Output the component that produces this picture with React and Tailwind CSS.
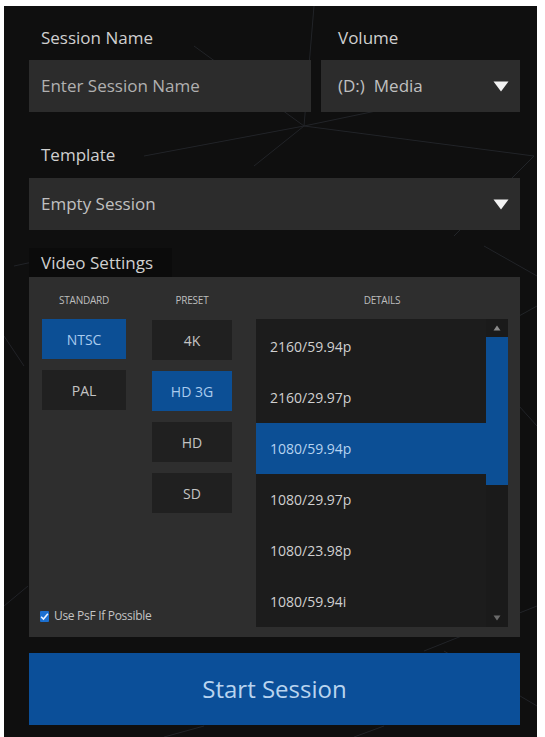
import React from "react";

const font = { fontFamily: '"Open Sans", "Noto Sans", "Liberation Sans", sans-serif' };

function Caret() {
  return (
    <svg width="16" height="11" viewBox="0 0 16 11" className="shrink-0">
      <path d="M0.5 0.5 L15.5 0.5 L8 10.5 Z" fill="#f2f2f2" />
    </svg>
  );
}

function PlainButton({ label, active }) {
  return (
    <div
      className={
        "h-[40px] flex items-center justify-center text-[14px] " +
        (active ? "bg-[#0c4f95] text-[#a9cbee]" : "bg-[#202020] text-[#c4c4c4]")
      }
    >
      {label}
    </div>
  );
}

const rows = ["2160/59.94p", "2160/29.97p", "1080/59.94p", "1080/29.97p", "1080/23.98p", "1080/59.94i"];

export default function App() {
  return (
    <div className="w-[545px] h-[737px] bg-white overflow-hidden" style={font}>
      <div className="relative ml-[4px] mt-[6px] w-[533px] h-[731px] bg-[#0f0f0f] pl-[25px] pr-[17px] pt-[20px] overflow-hidden">
        <svg className="absolute inset-0 pointer-events-none" width="533" height="731" viewBox="0 0 533 731">
          <g stroke="#2a2d33" strokeWidth="1" fill="none" opacity="0.7">
            <path d="M300 120 L190 40" />
            <path d="M300 120 L250 160" />
            <path d="M300 120 L420 95" />
            <path d="M300 120 L530 150" />
            <path d="M300 120 L310 0" />
            <path d="M300 120 L140 150" />
            <path d="M530 150 L450 230" />
            <path d="M0 330 L20 360" />
            <path d="M0 600 L24 580" />
            <path d="M515 310 L533 300" />
            <path d="M515 400 L533 420" />
            <path d="M420 645 L533 600" />
            <path d="M440 645 L533 700" />
            <path d="M160 731 L200 720" />
            <path d="M350 731 L380 720" />
            <path d="M80 245 L10 260" />
            <path d="M480 240 L533 270" />
          </g>
        </svg>

        <div className="relative">
          {/* Top row */}
          <div className="flex gap-[10px]">
            <div className="w-[282px]">
              <div className="pl-[12px] h-[24px] leading-[24px] text-[17px] text-[#d0d0d0]">Session Name</div>
              <div className="mt-[10px] h-[52px] bg-[#2c2c2c] flex items-center pl-[12px] text-[17px] text-[#b0b0b0]">
                Enter Session Name
              </div>
            </div>
            <div className="w-[199px]">
              <div className="pl-[17px] h-[24px] leading-[24px] text-[17px] text-[#d0d0d0]">Volume</div>
              <div className="mt-[10px] h-[52px] bg-[#2c2c2c] flex items-center justify-between pl-[17px] pr-[11px] text-[17px] text-[#c0c0c0]">
                <span>
                  (D:)<span className="ml-[9px]">Media</span>
                </span>
                <Caret />
              </div>
            </div>
          </div>

          {/* Template */}
          <div className="mt-[31px] pl-[12px] h-[24px] leading-[24px] text-[17px] text-[#d0d0d0]">Template</div>
          <div className="mt-[11px] h-[52px] bg-[#2c2c2c] flex items-center justify-between pl-[12px] pr-[11px] text-[17px] text-[#c0c0c0]">
            <span>Empty Session</span>
            <Caret />
          </div>

          {/* Video settings */}
          <div className="mt-[18px] w-[143px] h-[29px] bg-[#0b0b0b] pl-[12px] pt-[3px] leading-[24px] text-[17px] text-[#d0d0d0] whitespace-nowrap">
            Video Settings
          </div>
          <div className="h-[360px] bg-[#2e2e2e] pl-[13px] pr-[12px] pt-[16px] flex gap-0">
            {/* Standard */}
            <div className="w-[84px] flex flex-col">
              <div className="h-[14px] leading-[14px] text-[10px] text-[#bdbdbd] text-center tracking-tight">STANDARD</div>
              <div className="mt-[12px] flex flex-col gap-[11px]">
                <PlainButton label="NTSC" active />
                <PlainButton label="PAL" />
              </div>
              <div className="mt-auto mb-[12px] -ml-[2px] flex items-center gap-[5px] whitespace-nowrap">
                <div className="w-[11px] h-[11px] bg-[#1b6fd0] rounded-[1px] flex items-center justify-center">
                  <svg width="9" height="9" viewBox="0 0 8 8">
                    <path d="M1 4.2 L3.1 6.3 L7 1.6" stroke="#e8f2ff" strokeWidth="1.4" fill="none" />
                  </svg>
                </div>
                <span className="text-[12px] text-[#c4c4c4] tracking-tight">Use PsF If Possible</span>
              </div>
            </div>

            {/* Preset */}
            <div className="ml-[26px] w-[80px] flex flex-col">
              <div className="h-[14px] leading-[14px] text-[10px] text-[#bdbdbd] text-center tracking-tight">PRESET</div>
              <div className="mt-[13px] flex flex-col gap-[11px]">
                <PlainButton label="4K" />
                <PlainButton label="HD 3G" active />
                <PlainButton label="HD" />
                <PlainButton label="SD" />
              </div>
            </div>

            {/* Details */}
            <div className="ml-[24px] w-[252px] flex flex-col">
              <div className="h-[14px] leading-[14px] text-[10px] text-[#bdbdbd] text-center tracking-tight">DETAILS</div>
              <div className="mt-[12px] h-[308px] bg-[#1c1c1c] flex">
                <div className="flex-1 pt-[2px]">
                  {rows.map((r, i) => (
                    <div
                      key={r}
                      className={
                        "h-[51px] flex items-center pl-[14px] text-[14px] " +
                        (i === 2 ? "bg-[#0c4f95] text-[#b6d3f0]" : "text-[#d0d0d0]")
                      }
                    >
                      {r}
                    </div>
                  ))}
                </div>
                <div className="w-[22px] bg-[#1a1a1a] flex flex-col items-center">
                  <div className="h-[18px] flex items-center justify-center">
                    <svg width="8" height="6" viewBox="0 0 8 6">
                      <path d="M4 0.5 L7.5 5.5 L0.5 5.5 Z" fill="#8a8a8a" />
                    </svg>
                  </div>
                  <div className="w-full h-[148px] bg-[#0c4f95]" />
                  <div className="flex-1" />
                  <div className="h-[18px] flex items-center justify-center">
                    <svg width="8" height="6" viewBox="0 0 8 6">
                      <path d="M0.5 0.5 L7.5 0.5 L4 5.5 Z" fill="#6a6a6a" />
                    </svg>
                  </div>
                </div>
              </div>
            </div>
          </div>

          {/* Start Session */}
          <div className="mt-[16px] h-[72px] bg-[#0b4f99] flex items-center justify-center text-[24px] text-[#b9d4ef]">
            Start Session
          </div>
        </div>
      </div>
    </div>
  );
}
